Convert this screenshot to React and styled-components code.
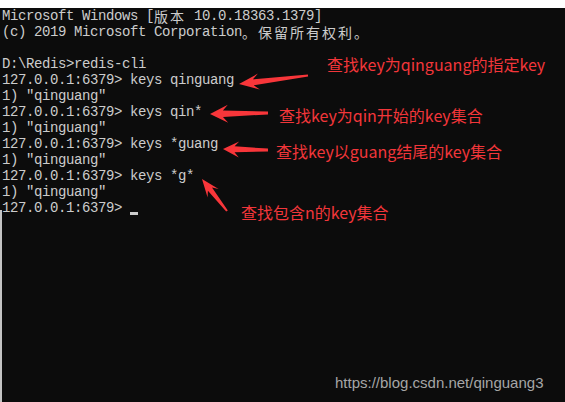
import React from "react";
import styled, { createGlobalStyle } from "styled-components";

const GlobalStyle = createGlobalStyle`
  html, body { margin: 0; padding: 0; background: #ffffff; overflow: hidden; }
  #root { width: 565px; height: 402px; }
`;

const Screen = styled.div`
  position: relative;
  width: 565px;
  height: 402px;
  display: flex;
  flex-direction: column;
  background: #ffffff;
`;

const TopStrip = styled.div`
  height: 8px;
  flex: none;
  background: #ffffff;
`;

const Console = styled.div`
  flex: 1;
  padding-left: 2px;
  background:
    linear-gradient(to right, #c4c4c4 2px, transparent 2px) 0 202px / 100% 100% no-repeat,
    #0c0c0c;
  color: #cccccc;
  font-family: "Liberation Mono", "Noto Sans CJK SC", monospace;
  font-size: 14px;
  letter-spacing: -0.4px;
`;

const Line = styled.div`
  height: 16px;
  line-height: 16px;
  white-space: pre;
`;

const Wide = styled.span`
  font-family: "Noto Sans CJK SC", sans-serif;
  font-size: 14px;
  letter-spacing: 2px;
  line-height: 12px;
  vertical-align: -2px;
`;

const Cursor = styled.span`
  display: inline-block;
  width: 8px;
  height: 3px;
  background: #cccccc;
  vertical-align: -3px;
`;

const Overlay = styled.div`
  position: absolute;
  inset: 0;
  pointer-events: none;
`;

const ArrowLayer = styled.svg`
  position: absolute;
  left: 0;
  top: 0;
`;

const Note = styled.div`
  position: absolute;
  white-space: nowrap;
  color: #f2363a;
  font-family: "Noto Sans CJK SC", sans-serif;
  font-size: 16px;
  line-height: 20px;
`;

const Watermark = styled.div`
  position: absolute;
  left: 335px;
  top: 374px;
  white-space: nowrap;
  color: #a6a6a6;
  font-family: "Liberation Sans", Arial, sans-serif;
  font-size: 15px;
  line-height: 18px;
`;

function arrowPoints([tx, ty], [ax, ay], L, W, w1, w0) {
  const dx = ax - tx;
  const dy = ay - ty;
  const len = Math.hypot(dx, dy);
  const ux = dx / len;
  const uy = dy / len;
  const px = -uy;
  const py = ux;
  const bx = tx + ux * L;
  const by = ty + uy * L;
  const jx = tx + ux * L * 0.72;
  const jy = ty + uy * L * 0.72;
  const pts = [
    [tx, ty],
    [bx + px * W, by + py * W],
    [jx + px * w1, jy + py * w1],
    [ax + px * w0, ay + py * w0],
    [ax - px * w0, ay - py * w0],
    [jx - px * w1, jy - py * w1],
    [bx - px * W, by - py * W],
  ];
  return pts.map((p) => p.map((v) => v.toFixed(1)).join(",")).join(" ");
}

const arrows = [
  { tip: [239, 84], tail: [308, 75.5], L: 20, W: 8, w1: 3, w0: 1 },
  { tip: [210, 114], tail: [268, 113], L: 18, W: 9, w1: 3.2, w0: 1.4 },
  { tip: [223, 149], tail: [268, 150], L: 16, W: 8, w1: 3, w0: 1.4 },
  { tip: [202, 179], tail: [227, 211], L: 18, W: 7, w1: 2.6, w0: 1 },
];

const notes = [
  { left: 327, top: 53.5, text: "查找key为qinguang的指定key" },
  { left: 279, top: 104.5, text: "查找key为qin开始的key集合" },
  { left: 276, top: 140.5, text: "查找key以guang结尾的key集合" },
  { left: 241, top: 201.5, text: "查找包含n的key集合" },
];

const prompt = "127.0.0.1:6379> ";

export default function App() {
  return (
    <>
      <GlobalStyle />
      <Screen>
        <TopStrip />
        <Console>
          <Line>
            Microsoft Windows [<Wide>版本</Wide> 10.0.18363.1379]
          </Line>
          <Line>
            (c) 2019 Microsoft Corporation<Wide>。保留所有权利。</Wide>
          </Line>
          <Line> </Line>
          <Line>D:\Redis&gt;redis-cli</Line>
          <Line>{prompt}keys qinguang</Line>
          <Line>1) "qinguang"</Line>
          <Line>{prompt}keys qin*</Line>
          <Line>1) "qinguang"</Line>
          <Line>{prompt}keys *guang</Line>
          <Line>1) "qinguang"</Line>
          <Line>{prompt}keys *g*</Line>
          <Line>1) "qinguang"</Line>
          <Line>
            {prompt}
            <Cursor />
          </Line>
        </Console>
        <Overlay>
          <ArrowLayer width="565" height="402" viewBox="0 0 565 402">
            {arrows.map((a, i) => (
              <polygon
                key={i}
                points={arrowPoints(a.tip, a.tail, a.L, a.W, a.w1, a.w0)}
                fill="#f8363a"
              />
            ))}
          </ArrowLayer>
          {notes.map((n, i) => (
            <Note key={i} style={{ left: n.left, top: n.top }}>
              {n.text}
            </Note>
          ))}
          <Watermark>https://blog.csdn.net/qinguang3</Watermark>
        </Overlay>
      </Screen>
    </>
  );
}
